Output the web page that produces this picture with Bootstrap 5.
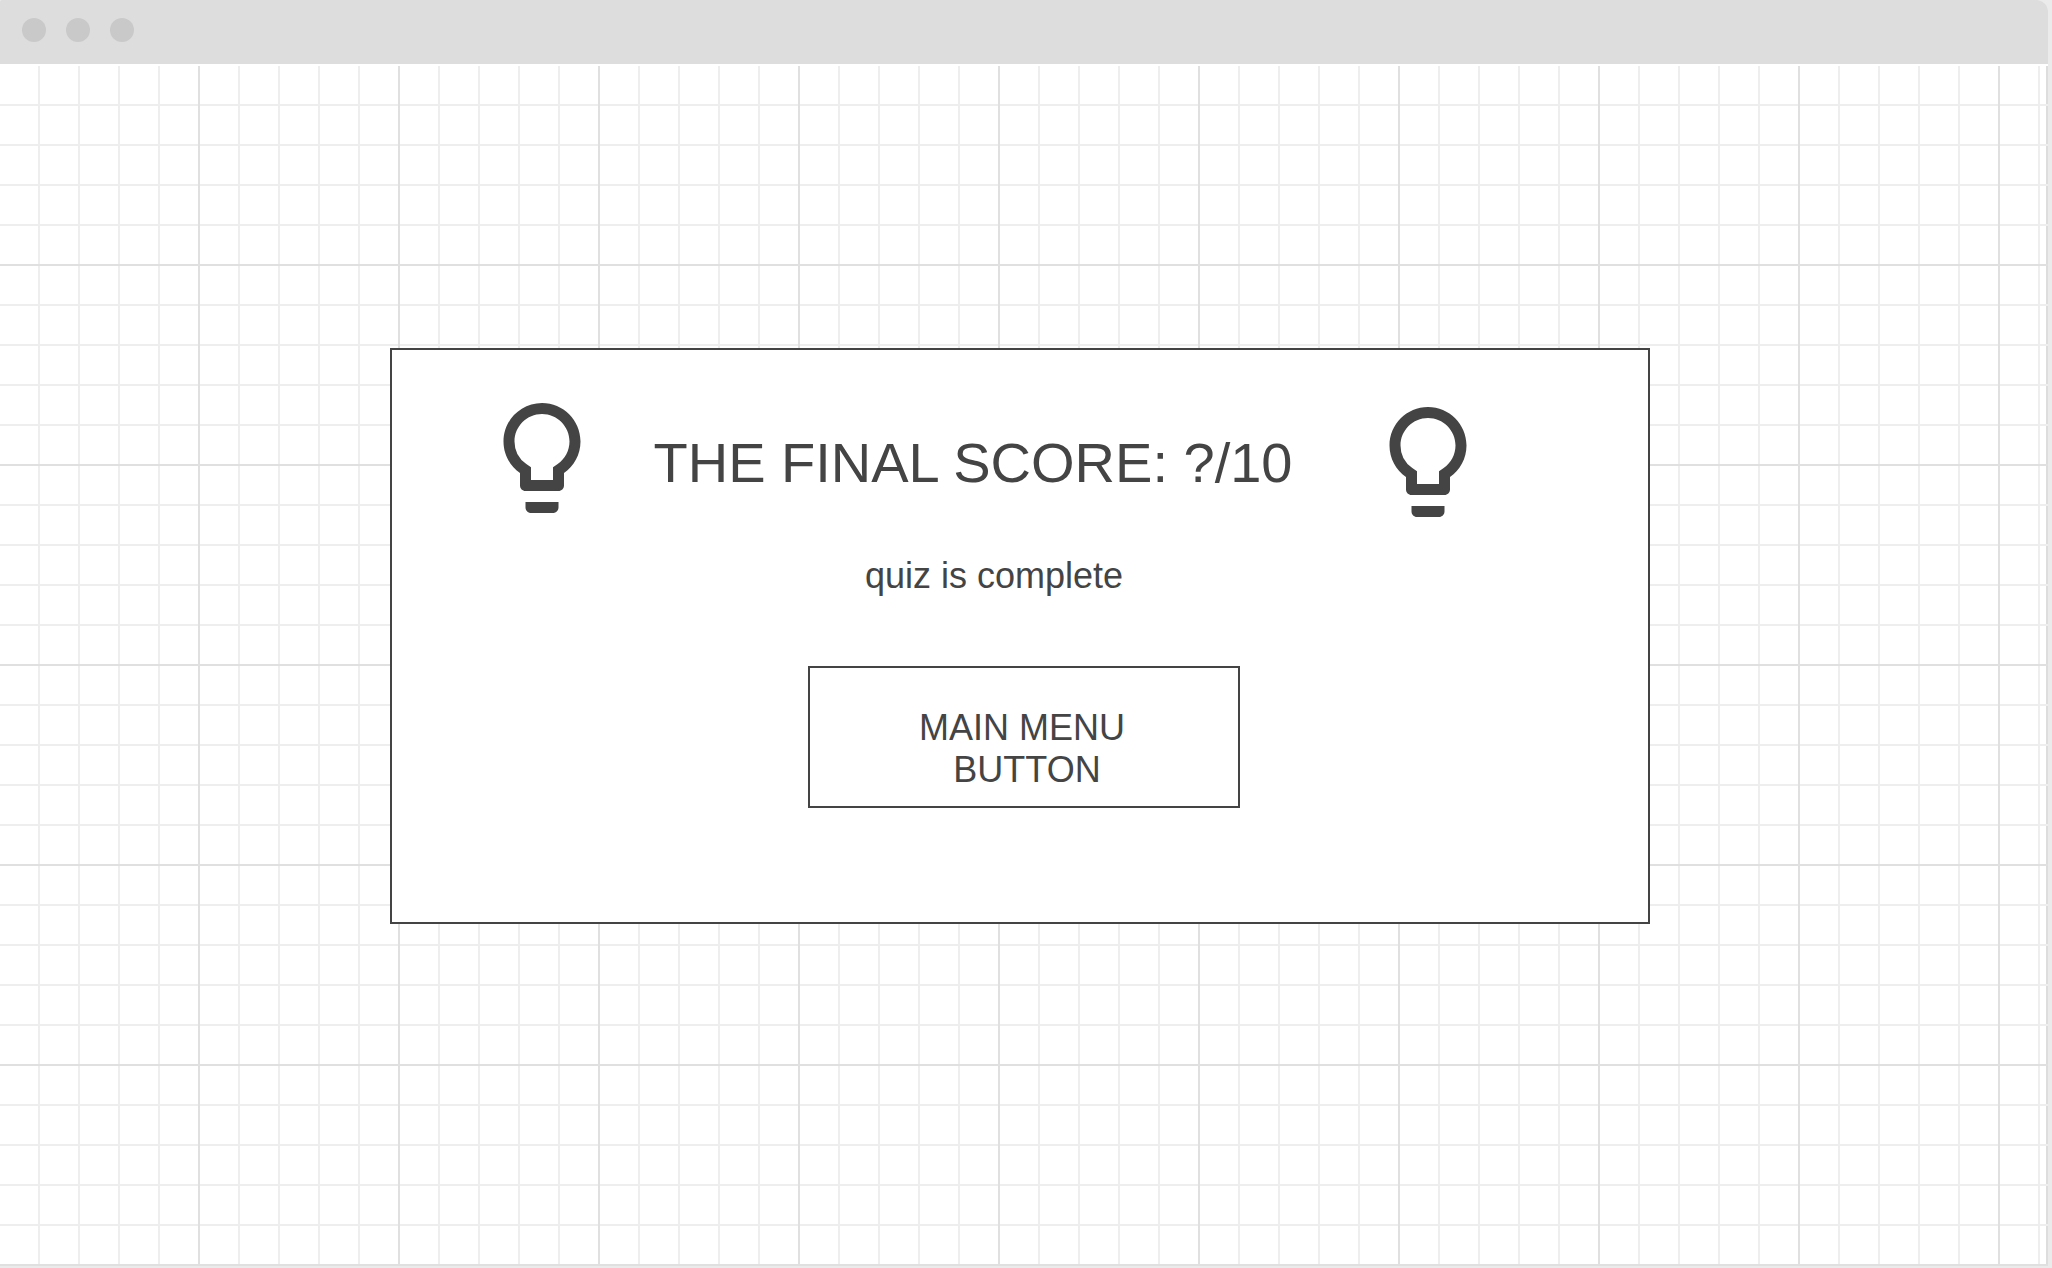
<!DOCTYPE html>
<html lang="en">
<head>
<meta charset="utf-8">
<meta name="viewport" content="width=device-width, initial-scale=1">
<title>Quiz score</title>
<link rel="stylesheet" href="https://cdn.jsdelivr.net/npm/bootstrap@5.3.0/dist/css/bootstrap.min.css">
<style>
  :root { --ink: #444; --minor: #eee; --major: #e0e0e0; }
  body { background: #ebebeb; color: var(--ink); font-family: "Liberation Sans", Arial, sans-serif; }
  .app-window { padding: 0 4px 2px 0; }
  .title-strip { height: 64px; padding: 0 22px 4px; gap: 20px; background: #ddd; border-radius: 2px 12px 0 0; }
  .window-dot { width: 24px; height: 24px; background: #c9c9c9; }
  /* graph paper: a line every 40px, a darker one every 200px */
  .graph-paper {
    padding: 0 8px 60px 0;
    border-top: 2px solid #fff;
    background-color: #fff;
    background-image:
      linear-gradient(to left, var(--major) 2px, transparent 2px),
      linear-gradient(to top, var(--major) 2px, transparent 2px),
      linear-gradient(to top, var(--minor) 2px, transparent 2px),
      linear-gradient(to left, var(--minor) 2px, transparent 2px),
      linear-gradient(to left, #ddd 2px, transparent 2px);
    background-size: 200px 200px, 200px 200px, 40px 40px, 40px 40px, 100% 100%;
  }
  .score-card { width: 100%; max-width: 1260px; padding: 42px 154px 114px 84px; border: 2px solid var(--ink); }
  .score-head { min-height: 136px; }
  .bulb { width: 132px; height: 132px; fill: var(--ink); }
  .score-title { font-size: 56px; line-height: 64px; padding-top: 6px; margin-right: 24px; font-weight: 400; }
  .score-note { font-size: 36px; line-height: 42px; margin: 27px 0 69px; padding-left: 18px; }
  .menu-row { padding-left: 78px; }
  .btn-menu {
    width: 432px; padding: 39px 4px 15px 0; border: 2px solid var(--ink); border-radius: 0;
    color: var(--ink); background: #fff; font-size: 36px; line-height: 42px;
  }
  .btn-menu:hover { color: #fff; background: var(--ink); }
</style>
<script src="https://cdn.jsdelivr.net/npm/bootstrap@5.3.0/dist/js/bootstrap.bundle.min.js" defer></script>
</head>
<body>
<div class="app-window d-flex flex-column min-vh-100">
  <header class="title-strip d-flex align-items-center">
    <span class="window-dot rounded-circle"></span>
    <span class="window-dot rounded-circle"></span>
    <span class="window-dot rounded-circle"></span>
  </header>
  <main class="graph-paper flex-grow-1 d-flex justify-content-center align-items-center">
    <section class="score-card bg-white">
      <div class="score-head d-flex justify-content-between">
        <svg class="bulb flex-shrink-0 align-self-start" viewBox="0 0 24 24" aria-hidden="true"><path d="M9 21c0 .55.45 1 1 1h4c.55 0 1-.45 1-1v-1H9v1zm3-19C8.14 2 5 5.14 5 9c0 2.38 1.19 4.47 3 5.74V17c0 .55.45 1 1 1h6c.55 0 1-.45 1-1v-2.26c1.81-1.27 3-3.36 3-5.74 0-3.86-3.14-7-7-7zm2.85 11.1l-.85.6V16h-4v-2.3l-.85-.6A4.997 4.997 0 0 1 7 9c0-2.76 2.24-5 5-5s5 2.24 5 5c0 1.63-.8 3.16-2.15 4.1z"/></svg>
        <h1 class="score-title mb-0 align-self-center">THE FINAL SCORE: ?/10</h1>
        <svg class="bulb flex-shrink-0 align-self-end" viewBox="0 0 24 24" aria-hidden="true"><path d="M9 21c0 .55.45 1 1 1h4c.55 0 1-.45 1-1v-1H9v1zm3-19C8.14 2 5 5.14 5 9c0 2.38 1.19 4.47 3 5.74V17c0 .55.45 1 1 1h6c.55 0 1-.45 1-1v-2.26c1.81-1.27 3-3.36 3-5.74 0-3.86-3.14-7-7-7zm2.85 11.1l-.85.6V16h-4v-2.3l-.85-.6A4.997 4.997 0 0 1 7 9c0-2.76 2.24-5 5-5s5 2.24 5 5c0 1.63-.8 3.16-2.15 4.1z"/></svg>
      </div>
      <p class="score-note text-center">quiz is complete</p>
      <div class="menu-row d-flex justify-content-center">
        <button type="button" class="btn btn-menu">MAIN MENU<br>&nbsp;BUTTON</button>
      </div>
    </section>
  </main>
</div>
</body>
</html>
